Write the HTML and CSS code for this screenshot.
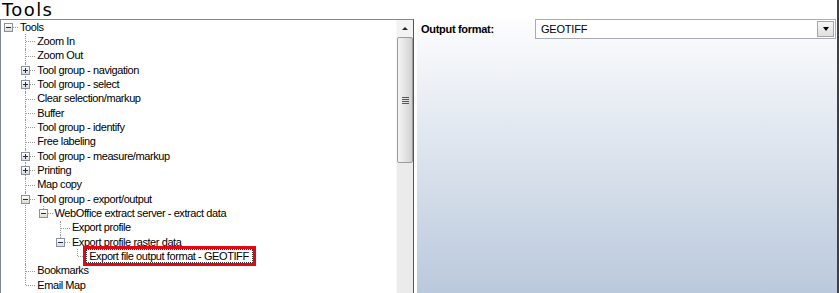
FILE: index.html
```html
<!DOCTYPE html>
<html>
<head>
    <meta charset="UTF-8">
    <title>Tools</title>
    <link rel="stylesheet" href="styles.css">
</head>
<body>
    <div class="window">
        <div class="title">Tools</div>
        <div class="main">
            <div class="tree-pane">
                <div class="tree-view">
                    <ul class="tree">
                        <li class="root">
                            <div class="row"><span class="slot"><span class="exp"></span></span><span class="label">Tools</span></div>
                            <ul>
                                <li><div class="row"><span class="slot"></span><span class="label">Zoom In</span></div></li>
                                <li><div class="row"><span class="slot"></span><span class="label">Zoom Out</span></div></li>
                                <li><div class="row"><span class="slot"><span class="exp plus"></span></span><span class="label">Tool group - navigation</span></div></li>
                                <li><div class="row"><span class="slot"><span class="exp plus"></span></span><span class="label">Tool group - select</span></div></li>
                                <li><div class="row"><span class="slot"></span><span class="label">Clear selection/markup</span></div></li>
                                <li><div class="row"><span class="slot"></span><span class="label">Buffer</span></div></li>
                                <li><div class="row"><span class="slot"></span><span class="label">Tool group - identify</span></div></li>
                                <li><div class="row"><span class="slot"></span><span class="label">Free labeling</span></div></li>
                                <li><div class="row"><span class="slot"><span class="exp plus"></span></span><span class="label">Tool group - measure/markup</span></div></li>
                                <li><div class="row"><span class="slot"><span class="exp plus"></span></span><span class="label">Printing</span></div></li>
                                <li><div class="row"><span class="slot"></span><span class="label">Map copy</span></div></li>
                                <li>
                                    <div class="row"><span class="slot"><span class="exp"></span></span><span class="label">Tool group - export/output</span></div>
                                    <ul>
                                        <li>
                                            <div class="row"><span class="slot"><span class="exp"></span></span><span class="label">WebOffice extract server - extract data</span></div>
                                            <ul>
                                                <li><div class="row"><span class="slot"></span><span class="label">Export profile</span></div></li>
                                                <li>
                                                    <div class="row"><span class="slot"><span class="exp"></span></span><span class="label">Export profile raster data</span></div>
                                                    <ul>
                                                        <li><div class="row"><span class="slot"></span><span class="label selected">Export file output format - GEOTIFF</span></div></li>
                                                    </ul>
                                                </li>
                                            </ul>
                                        </li>
                                    </ul>
                                </li>
                                <li><div class="row"><span class="slot"></span><span class="label">Bookmarks</span></div></li>
                                <li class="more"><div class="row"><span class="slot"></span><span class="label">Email Map</span></div></li>
                            </ul>
                        </li>
                    </ul>
                </div>
                <div class="scrollbar">
                    <div class="sb-up"><span class="arrow-up"></span></div>
                    <div class="sb-thumb"><span class="grip"></span></div>
                    <div class="sb-track"></div>
                </div>
            </div>
            <div class="settings">
                <div class="field">
                    <span class="field-label">Output format:</span>
                    <div class="combo">
                        <span class="combo-value">GEOTIFF</span>
                        <span class="combo-btn"><span class="arrow-down"></span></span>
                    </div>
                </div>
            </div>
        </div>
    </div>
</body>
</html>
```

FILE: styles.css
```css
body {
    margin: 0;
    background-color: #fff;
    font-family: "Liberation Sans", Arial, sans-serif;
    font-size: 11px;
    color: #000;
}
.window {
    width: 837px;
    height: 293px;
    border-right: 2px solid #3f4145;
    display: flex;
    flex-direction: column;
    overflow: hidden;
}
.title {
    height: 19px;
    padding-left: 2px;
    font-family: "DejaVu Sans", sans-serif;
    font-size: 18px;
    line-height: 20px;
    letter-spacing: 1.4px;
}
.main {
    flex: 1;
    display: flex;
    gap: 3px;
    min-height: 0;
}

/* tree */
.tree-pane {
    width: 412px;
    border: 1px solid #828790;
    border-bottom: none;
    border-right-color: #555;
    display: flex;
}
.tree-view {
    flex: 1;
    overflow: hidden;
}
.tree, .tree ul {
    list-style: none;
    margin: 0;
    padding: 0;
}
.tree ul {
    padding-left: 17.3px;
}
.tree li {
    position: relative;
}
.tree li li::before {
    content: "";
    position: absolute;
    left: 7px;
    top: 0;
    bottom: 0;
    border-left: 1px dotted #9a9a9a;
}
.tree li li:last-child::before {
    bottom: auto;
    height: 7px;
}
.tree li.more::before {
    bottom: -20px;
    height: auto;
}
.tree li::after {
    content: "";
    position: absolute;
    left: 8px;
    top: 7px;
    width: 9px;
    border-top: 1px dotted #9a9a9a;
}
.row {
    display: flex;
    align-items: center;
    height: 14.33px;
    white-space: nowrap;
}
.slot {
    width: 19px;
    flex: none;
    display: flex;
    align-items: center;
}
.exp {
    position: relative;
    z-index: 1;
    width: 7px;
    height: 7px;
    margin-left: 3px;
    border: 1px solid #8a929c;
    background: linear-gradient(#fff, #dedbd4);
}
.exp::before {
    content: "";
    position: absolute;
    left: 1px;
    top: 3px;
    width: 5px;
    height: 1px;
    background: #1c2a55;
}
.exp.plus::after {
    content: "";
    position: absolute;
    left: 3px;
    top: 1px;
    width: 1px;
    height: 5px;
    background: #1c2a55;
}
.label {
    letter-spacing: -0.42px;
    line-height: 13px;
}
.label.selected {
    position: relative;
    z-index: 1;
    margin-left: -3px;
    padding: 0 3px 0 2px;
    line-height: 12px;
    border: 1px dotted #333;
    outline: 3px solid #e30613;
}

/* scrollbar */
.scrollbar {
    width: 16px;
    display: flex;
    flex-direction: column;
    background-color: #ebebeb;
    border-left: 1px solid #f7f7f7;
}
.sb-up {
    height: 17px;
    display: flex;
    align-items: center;
    justify-content: center;
    background-color: #f3f3f3;
}
.arrow-up {
    border-bottom: 3px solid #222;
    border-left: 3px solid transparent;
    border-right: 3px solid transparent;
}
.sb-thumb {
    height: 124px;
    border: 1px solid #9b9b9b;
    border-radius: 2px;
    background: linear-gradient(to right, #f4f4f4, #e4e4e4 50%, #cfcfcf);
    display: flex;
    align-items: center;
    justify-content: center;
}
.grip {
    width: 7px;
    height: 7px;
    background: repeating-linear-gradient(#555 0 1px, transparent 1px 2px);
}
.sb-track {
    flex: 1;
}

/* settings panel */
.settings {
    flex: 1;
    padding: 0 1px 0 4px;
    background: linear-gradient(#fdfdfe, #bac9dc);
}
.field {
    display: flex;
    align-items: center;
    height: 20px;
}
.field-label {
    width: 114px;
    font-weight: bold;
    letter-spacing: -0.3px;
}
.combo {
    flex: 1;
    height: 18px;
    border: 1px solid #a9acb2;
    background-color: #fff;
    display: flex;
    align-items: center;
}
.combo-value {
    flex: 1;
    padding-left: 5px;
    letter-spacing: -0.2px;
}
.combo-btn {
    width: 15px;
    height: 14px;
    margin-right: 1px;
    border: 1px solid #a6a6a6;
    background: linear-gradient(#f6f6f6, #e0e0e0);
    display: flex;
    align-items: center;
    justify-content: center;
}
.arrow-down {
    border-top: 4px solid #000;
    border-left: 3px solid transparent;
    border-right: 3px solid transparent;
}
```
